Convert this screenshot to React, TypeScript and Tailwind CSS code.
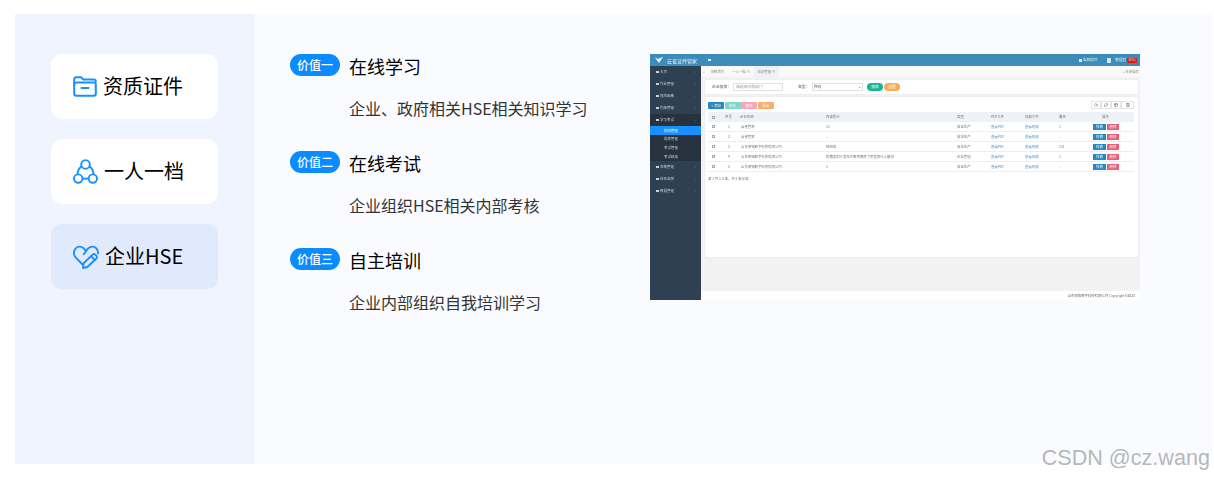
import React from "react";
import { Search, RefreshCw, Table2, Columns3 } from "lucide-react";

const FONT = "font-['Noto_Sans_CJK_SC','Noto_Sans',sans-serif]";

function FolderIcon() {
  return (
    <svg width="24" height="21" viewBox="0 0 24 21" fill="none" stroke="#1890ff" strokeWidth="2" strokeLinejoin="round" strokeLinecap="round">
      <path d="M1.2 9V3.2C1.2 2 2 1.2 3.2 1.2H8.2L10.4 3.6H20.8C22 3.6 22.8 4.4 22.8 5.4" />
      <path d="M3.2 6.6H20.8C22 6.6 22.8 7.4 22.8 8.6V17.8C22.8 19 22 19.8 20.8 19.8H3.2C2 19.8 1.2 19 1.2 17.8V8.6C1.2 7.4 2 6.6 3.2 6.6Z" />
      <path d="M8.5 12H15.5" />
    </svg>
  );
}

function TriadIcon() {
  return (
    <svg width="25" height="25" viewBox="0 0 25 25" fill="none" stroke="#1890ff" strokeWidth="1.9">
      <circle cx="12.5" cy="5.4" r="4.3" />
      <circle cx="5.2" cy="19.6" r="4.2" />
      <circle cx="19.8" cy="19.6" r="4.2" />
      <path d="M8.6 7.4C6 9.2 4.6 12 4.5 15.4" />
      <path d="M16.4 7.4C19 9.2 20.4 12 20.5 15.4" />
      <path d="M9.4 19.6H15.6" />
    </svg>
  );
}

function HeartPenIcon() {
  return (
    <svg width="26" height="24" viewBox="0 0 26 24" fill="none" stroke="#1890ff" strokeWidth="1.9" strokeLinejoin="round" strokeLinecap="round">
      <path d="M9.5 19.5L2.6 12.4C0.3 10 0.4 5.9 2.7 3.4C5.2 0.7 9.2 1.1 11.6 4.2L13 6.1L14.4 4.2C16.8 1.1 21 0.7 23.4 3.4C24.6 4.8 25.2 6.6 25 8.4" />
      <path d="M13 6.1L10.8 9.2" />
      <path d="M10.6 18.2L19.6 9.6C20.4 8.9 21.6 8.9 22.4 9.7L23.4 10.8C24.1 11.6 24.1 12.7 23.3 13.5L14.4 22L10 23L10.6 18.2Z" />
      <path d="M18 11.2L21.8 15" />
    </svg>
  );
}

function NavCard({ icon, label, active }: { icon: React.ReactNode; label: string; active?: boolean }) {
  return (
    <div className={`flex h-[65px] items-center gap-[6px] rounded-[11px] pl-[22px] ${active ? "bg-[#e1e9fc]" : "bg-white"}`}>
      {icon}
      <span className="pb-[2px] text-[20px] leading-none text-black">{label}</span>
    </div>
  );
}

function Value({ badge, title, desc }: { badge: string; title: string; desc: string }) {
  return (
    <div className="flex h-[97px] items-start">
      <span className="mr-[9px] flex h-[22px] w-[50px] items-center justify-center rounded-full bg-[#0a8bff] text-[12px] font-medium leading-none text-white">{badge}</span>
      <div>
        <div className="flex h-[24px] items-center text-[18px] leading-none text-black">{title}</div>
        <div className="mt-[18px] flex h-[24px] items-center text-[16px] leading-none text-[#333]">{desc}</div>
      </div>
    </div>
  );
}

const menuTop = ["主页", "作业管理", "危险因素", "内部管理"];
const menuBottom = ["系统管理", "综合监控", "数据管理"];
const subMenu = ["知识管理", "题库管理", "考试管理", "考试结果"];

function MenuItem({ label, active }: { label: string; active?: boolean }) {
  return (
    <div className={`flex h-[12px] items-center justify-between pl-[6px] pr-[5px] ${active ? "bg-[#26333f]" : ""}`}>
      <span className="flex items-center gap-[1px]">
        <span className="h-[2px] w-[3px] bg-[#c8d0d8]" />
        <span>{label}</span>
      </span>
      <span className="text-[#8c99a6]">‹</span>
    </div>
  );
}

function Sidebar() {
  return (
    <div className="flex w-[51px] shrink-0 flex-col bg-[#2e4052] text-[3.5px] leading-none text-[#c7ced6]">
      <div className="flex h-[12px] items-center gap-[4px] bg-[#3d8dbb] pl-[5px] text-[5px] text-[#e4f0f7]">
        <svg width="8" height="6" viewBox="0 0 8 6"><path d="M0 .5L3 2 5 1l3-1-2 3-2 3-2-2.5z" fill="#eef7fc" /></svg>
        <span>云雀证件管家</span>
      </div>
      {menuTop.map((m) => <MenuItem key={m} label={m} />)}
      <MenuItem label="学习考试" active />
      <div className="flex h-[35px] flex-col bg-[#26333f]">
        {subMenu.map((m, i) => (
          <div key={m} className={`flex flex-1 items-center pl-[14px] ${i === 0 ? "bg-[#1890ff] text-white" : ""}`}>{m}</div>
        ))}
      </div>
      {menuBottom.map((m) => <MenuItem key={m} label={m} />)}
    </div>
  );
}

const rows = [
  ["1", "云雀管家", "11", "安全生产", "1"],
  ["2", "云雀管家", "--", "安全生产", "-"],
  ["3", "山东顺铭数字科技有限公司", "啦啦啦", "安全生产", "111"],
  ["4", "山东顺铭数字科技有限公司", "的撒发的沙发地方离奇离奇了吧发放什么感觉", "企业管理", "1"],
  ["5", "山东顺铭数字科技有限公司", "1", "安全生产", "-"],
];

const tableCols = "grid grid-cols-[15px_15px_87px_130px_34px_34px_34px_34px_43px] items-center";

function MiniBtn({ label, color }: { label: string; color: string }) {
  return <span className={`flex h-[7px] w-[16px] items-center justify-center rounded-[1px] text-white ${color}`}>{label}</span>;
}

function Box() {
  return <span className="block h-[3px] w-[3px] border-[0.5px] border-[#aaa]" />;
}

function ToolBtn({ w, children }: { w: string; children: React.ReactNode }) {
  return <span className={`flex h-[8px] items-center justify-center border-[0.5px] border-[#e4e4e4] text-[#555] ${w}`}>{children}</span>;
}

function TableCard() {
  return (
    <div className="ml-[4px] mr-[2px] mt-[3px] flex h-[160px] flex-col rounded-[1px] bg-white pl-[3px] pr-[4px] pt-[4px] text-[3.4px] shadow-[0_0_1px_#c8c8c8]">
      <div className="flex items-end justify-between">
        <div className="flex gap-[0.5px]">
          <MiniBtn label="+ 添加" color="bg-[#2a86c0]" />
          <MiniBtn label="修改" color="bg-[#7fd8c8]" />
          <MiniBtn label="删除" color="bg-[#f5a7b4]" />
          <MiniBtn label="导出" color="bg-[#f8ae6b]" />
        </div>
        <div className="flex gap-[0.5px]">
          <ToolBtn w="w-[9.5px]"><Search size={4} /></ToolBtn>
          <ToolBtn w="w-[9.5px]"><RefreshCw size={4} /></ToolBtn>
          <ToolBtn w="w-[9.5px]"><Table2 size={4} /></ToolBtn>
          <ToolBtn w="w-[13px]"><Columns3 size={4} /></ToolBtn>
        </div>
      </div>
      <div className={`${tableCols} mt-[3px] h-[10px] bg-[#eef1f6] text-[#777]`}>
        <span className="pl-[4px]"><Box /></span>
        <span className="pl-[2px]">序号</span>
        <span className="pl-[2px]">企业名称</span>
        <span className="pl-[1px]">内容提示</span>
        <span className="pl-[2px]">类型</span>
        <span className="pl-[2px]">PDF文件</span>
        <span className="pl-[2px]">视频文件</span>
        <span className="pl-[2px]">署名</span>
        <span className="pl-[11px]">操作</span>
      </div>
      {rows.map((r) => (
        <div key={r[0]} className={`${tableCols} h-[10px] border-b-[0.5px] border-[#eee] text-[#777]`}>
          <span className="pl-[4px]"><Box /></span>
          <span className="pl-[5px]">{r[0]}</span>
          <span className="pl-[3px]">{r[1]}</span>
          <span className="pl-[1px]">{r[2]}</span>
          <span className="pl-[2px]">{r[3]}</span>
          <span className="pl-[2px] text-[#5a93c4]">查看PDF</span>
          <span className="pl-[2px] text-[#5a93c4]">查看视频</span>
          <span className="pl-[2px]">{r[4]}</span>
          <span className="flex gap-[1px] pl-[2px] text-white">
            <span className="flex h-[6px] w-[13px] items-center justify-center bg-[#2a86c0]">详情</span>
            <span className="flex h-[6px] w-[12px] items-center justify-center bg-[#e2607a]">删除</span>
          </span>
        </div>
      ))}
      <div className="mt-[5px] text-[#777]">第 1 页 1-5 条，共 5 条记录。</div>
    </div>
  );
}

function AppShot() {
  return (
    <div className="flex h-[246px] w-[490px] shrink-0 overflow-hidden text-[3.8px] leading-none blur-[0.35px]">
      <Sidebar />
      <div className="flex min-w-0 flex-1 flex-col bg-[#f2f2f2]">
        <div className="flex h-[12px] shrink-0 items-center justify-between bg-[#3d8dbb] pl-[7px] pr-[3px] text-[#e6f2f9]">
          <span className="h-[2px] w-[3px] bg-[#e6f2f9]" />
          <div className="flex items-center">
            <span className="mr-[9px] flex w-[19px] items-center gap-[1px]">
              <span className="h-[3px] w-[3px] shrink-0 bg-[#cfe4f1]" />
              <span className="whitespace-nowrap text-[3.6px]">全屏模式</span>
            </span>
            <span className="mr-[4px] h-[5px] w-[4px] bg-[#cfe4f1]" />
            <span className="w-[12px] whitespace-nowrap">管理员</span>
            <span className="flex h-[5px] w-[10px] items-center justify-center rounded-[1px] bg-[#c9201b] text-[#f4b0ac]">退出</span>
          </div>
        </div>
        <div className="flex h-[11px] shrink-0 items-center bg-[#fafafa] pl-[2px] pr-[1px] text-[3.4px] text-[#888]">
          <span className="mr-[6px]">«</span>
          <span className="mr-[8px]">系统首页</span>
          <span className="mr-[4px]">一人一档 ⊙</span>
          <span className="flex h-[11px] w-[25px] items-center justify-center bg-[#eef1f6]">知识管理 ⊙</span>
          <span className="ml-auto">» 关闭操作</span>
        </div>
        <div className="ml-[4px] mr-[2px] mt-[3px] flex h-[14px] shrink-0 items-center rounded-[1px] bg-white pl-[7px] text-[#555] shadow-[0_0_1px_#d0d0d0]">
          <span className="mr-[2px]">企业搜索：</span>
          <span className="mr-[15px] flex h-[8px] w-[50px] items-center border-[0.5px] border-[#e2e2e2] pl-[2px] text-[#999]">请选择问题部门</span>
          <span className="mr-[2.6px]">类型：</span>
          <span className="mr-[4px] flex h-[8px] w-[51px] items-center justify-between border-[0.5px] border-[#e2e2e2] px-[1px]"><span>所有</span><span>⌄</span></span>
          <span className="mr-[1px] flex h-[8px] w-[16px] items-center justify-center rounded-full bg-[#1ab394] text-white">搜索</span>
          <span className="flex h-[8px] w-[16px] items-center justify-center rounded-full bg-[#f8ac59] text-white">重置</span>
        </div>
        <TableCard />
        <div className="flex-1" />
        <div className="flex h-[9px] shrink-0 items-center justify-end bg-white pr-[5px] text-[3.4px] text-[#666]">山东顺铭数字科技有限公司 Copyright©2023</div>
      </div>
    </div>
  );
}

export default function App() {
  return (
    <div className={`relative h-[478px] w-[1214px] overflow-hidden bg-white pl-[15px] pt-[14px] ${FONT}`}>
      <div className="flex h-[450px] w-[1197px]">
        <aside className="flex w-[239px] shrink-0 flex-col gap-[20px] bg-[#eff4ff] px-[36px] pt-[40px]">
          <NavCard icon={<FolderIcon />} label="资质证件" />
          <NavCard icon={<TriadIcon />} label="一人一档" />
          <NavCard icon={<HeartPenIcon />} label="企业HSE" active />
        </aside>
        <main className="flex flex-1 items-start bg-[#fafbff] pl-[36px] pt-[40px]">
          <div className="w-[360px] shrink-0">
            <Value badge="价值一" title="在线学习" desc="企业、政府相关HSE相关知识学习" />
            <Value badge="价值二" title="在线考试" desc="企业组织HSE相关内部考核" />
            <Value badge="价值三" title="自主培训" desc="企业内部组织自我培训学习" />
          </div>
          <AppShot />
        </main>
      </div>
      <div className="absolute right-[4px] top-[445px] font-['Liberation_Sans',sans-serif] text-[21.6px] leading-[26px] text-[#b4b7bb] [text-shadow:1px_1px_0_#fff]">CSDN @cz.wang</div>
    </div>
  );
}
